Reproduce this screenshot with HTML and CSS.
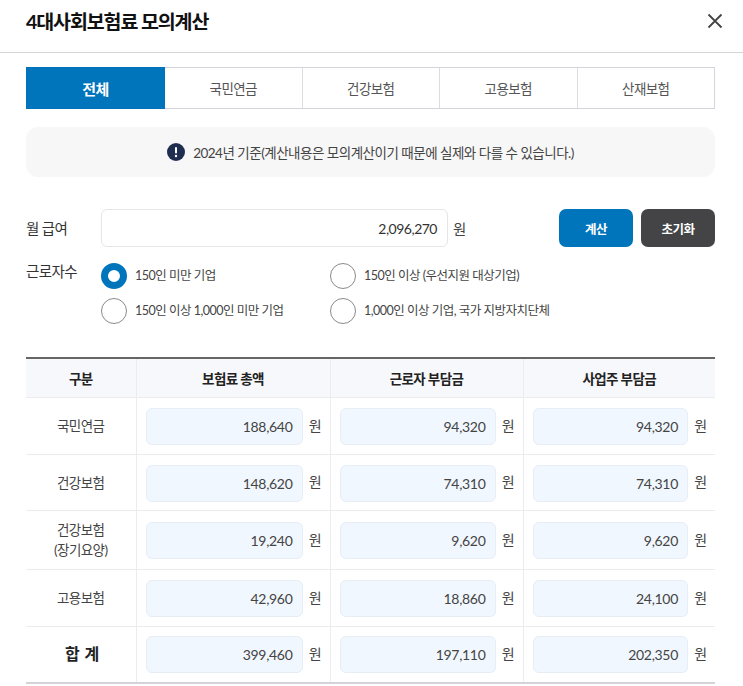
FILE: index.html
```html
<!DOCTYPE html>
<html lang="ko">
<head>
<meta charset="utf-8">
<title>4대사회보험료 모의계산</title>
<link rel="stylesheet" href="styles.css">
</head>
<body>
<header class="head">
  <h1 class="title">4대사회보험료 모의계산</h1>
  <button class="close" aria-label="닫기"><svg width="16" height="16" viewBox="0 0 16 16"><path d="M1.5 1.5 14.5 14.5M14.5 1.5 1.5 14.5" stroke="#444" stroke-width="1.8" fill="none"/></svg></button>
</header>
<main class="body">
  <nav class="tabs">
    <a class="tab active">전체</a><a class="tab">국민연금</a><a class="tab">건강보험</a><a class="tab">고용보험</a><a class="tab">산재보험</a>
  </nav>
  <div class="notice">
    <svg width="18" height="18" viewBox="0 0 18 18"><circle cx="9" cy="9" r="9" fill="#1f2d50"/><rect x="8" y="4" width="2" height="6.5" rx="1" fill="#fff"/><circle cx="9" cy="13" r="1.2" fill="#fff"/></svg>
    <span>2024년 기준(계산내용은 모의계산이기 때문에 실제와 다를 수 있습니다.)</span>
  </div>
  <section class="form">
    <div class="salary">
      <label class="flabel">월 급여</label>
      <div class="field">2,096,270</div>
      <span class="won">원</span>
      <div class="btns"><button class="btn blue">계산</button><button class="btn dark">초기화</button></div>
    </div>
    <div class="workers">
      <label class="flabel">근로자수</label>
      <div class="radios">
        <div class="radio"><i class="dot on"></i>150인 미만 기업</div>
        <div class="radio"><i class="dot"></i>150인 이상 (우선지원 대상기업)</div>
        <div class="radio"><i class="dot"></i>150인 이상 1,000인 미만 기업</div>
        <div class="radio"><i class="dot"></i>1,000인 이상 기업, 국가 지방자치단체</div>
      </div>
    </div>
  </section>
  <table class="table">
    <colgroup><col class="c0"><col class="c1"><col class="c2"><col class="c3"></colgroup>
    <thead><tr><th>구분</th><th>보험료 총액</th><th>근로자 부담금</th><th>사업주 부담금</th></tr></thead>
    <tbody>
      <tr><td class="name">국민연금</td><td><div class="cell"><div class="amt">188,640</div><span>원</span></div></td><td><div class="cell"><div class="amt">94,320</div><span>원</span></div></td><td><div class="cell"><div class="amt">94,320</div><span>원</span></div></td></tr>
      <tr><td class="name">건강보험</td><td><div class="cell"><div class="amt">148,620</div><span>원</span></div></td><td><div class="cell"><div class="amt">74,310</div><span>원</span></div></td><td><div class="cell"><div class="amt">74,310</div><span>원</span></div></td></tr>
      <tr class="tall"><td class="name">건강보험<br>(장기요양)</td><td><div class="cell"><div class="amt">19,240</div><span>원</span></div></td><td><div class="cell"><div class="amt">9,620</div><span>원</span></div></td><td><div class="cell"><div class="amt">9,620</div><span>원</span></div></td></tr>
      <tr><td class="name">고용보험</td><td><div class="cell"><div class="amt">42,960</div><span>원</span></div></td><td><div class="cell"><div class="amt">18,860</div><span>원</span></div></td><td><div class="cell"><div class="amt">24,100</div><span>원</span></div></td></tr>
      <tr><td class="name total">합 계</td><td><div class="cell"><div class="amt">399,460</div><span>원</span></div></td><td><div class="cell"><div class="amt">197,110</div><span>원</span></div></td><td><div class="cell"><div class="amt">202,350</div><span>원</span></div></td></tr>
    </tbody>
  </table>
</main>
</body>
</html>
```
FILE: styles.css
```css
* { box-sizing: border-box; }
html, body { margin: 0; padding: 0; background: #fff; overflow: hidden; }
body { font-family: Lato, "Noto Sans CJK KR", sans-serif; color: #333; font-size: 13px; letter-spacing: -0.6px; }
.head { height: 53px; border-bottom: 1px solid #d4d4d8; display: flex; align-items: center; justify-content: space-between; padding: 0 20px 9px 26px; }
.title { margin: 0; font-size: 19.5px; font-weight: 700; color: #111; letter-spacing: -1.1px; line-height: 26px; }
.close { border: 0; background: none; padding: 0; width: 16px; height: 16px; display: block; position: relative; top: -1px; }
.close svg { display: block; }
.body { padding: 14px 28px 0 26px; }
.tabs { display: flex; height: 42px; border: 1px solid #d4d4da; border-left: 0; }
.tab { flex: 1 1 0; display: flex; align-items: center; justify-content: center; border-right: 1px solid #dcdce0; color: #555; font-size: 13.5px; }
.tab:last-child { border-right: 0; }
.tab.active { flex: 0 0 139px; margin: -1px 0; background: #0075bc; color: #fff; font-size: 15px; font-weight: 700; border-right: 0; }
.notice { margin-top: 18px; height: 50px; background: #f7f7f8; border-radius: 12px; display: flex; align-items: center; justify-content: center; gap: 8px; color: #444; font-size: 13.5px; letter-spacing: -0.5px; }
.form { margin-top: 32px; }
.salary { display: flex; align-items: center; height: 38px; }
.flabel { width: 75px; flex: none; font-size: 14.5px; color: #333; position: relative; top: -1px; }
.field { width: 347px; height: 38px; border: 1px solid #e6e6e8; border-radius: 6px; display: flex; align-items: center; justify-content: flex-end; padding-right: 10px; font-size: 14px; letter-spacing: -0.5px; color: #333; }
.won { margin-left: 5px; font-size: 14.5px; color: #444; }
.btns { margin-left: auto; display: flex; gap: 8px; }
.btn { width: 74px; height: 38px; border: 0; border-radius: 7px; color: #fff; font: 700 12.5px Lato, "Noto Sans CJK KR", sans-serif; letter-spacing: -0.5px; padding: 0; }
.blue { background: #0075bc; }
.dark { background: #444446; }
.workers { display: flex; margin-top: 15px; }
.workers .flabel { line-height: 20px; top: 0; }
.radios { display: grid; grid-template-columns: 229px auto; row-gap: 8px; justify-content: start; }
.radio { display: flex; align-items: center; gap: 8px; height: 27px; color: #444; font-size: 12.5px; letter-spacing: -0.5px; line-height: 25px; }
.dot { width: 26px; height: 26px; flex: none; border-radius: 50%; border: 1.5px solid #8a8a8a; background: #fff; }
.dot.on { border: 7.5px solid #0075bc; }
.table { margin-top: 33px; width: 689px; border-collapse: collapse; table-layout: fixed; border-bottom: 2px solid #d4d4d8; }
.c0 { width: 110px; } .c1 { width: 194px; } .c2 { width: 193px; } .c3 { width: 192px; }
th { height: 39.9px; background: #f7f8fb; border-top: 2px solid #666; border-bottom: 1px solid #ececef; border-left: 1px solid #ececef; font-size: 13.5px; font-weight: 700; color: #222; padding: 0 0 1px; }
td { height: 56.5px; border-bottom: 1px solid #ececef; border-left: 1px solid #ececef; padding: 1px 8px 0 9px; }
.tall td { height: 59px; }
th:first-child, td:first-child { border-left: 0; }
tbody tr:last-child td { border-bottom: 0; }
td.name { text-align: center; font-size: 13.5px; letter-spacing: -0.55px; color: #444; line-height: 20px; padding: 0; }
td.total { font-size: 16px; font-weight: 700; color: #222; letter-spacing: 0.4px; padding-left: 3px; }
.cell { display: flex; align-items: center; }
.amt { flex: 1; height: 37px; background: #f1f7fe; border: 1px solid #e6edf5; border-radius: 6px; display: flex; align-items: center; justify-content: flex-end; padding-right: 9px; font-size: 14px; letter-spacing: -0.3px; color: #444; }
.cell span { flex: none; margin-left: 6px; width: 13px; text-align: center; font-size: 14px; line-height: 20px; color: #444; position: relative; top: -1px; }
```
